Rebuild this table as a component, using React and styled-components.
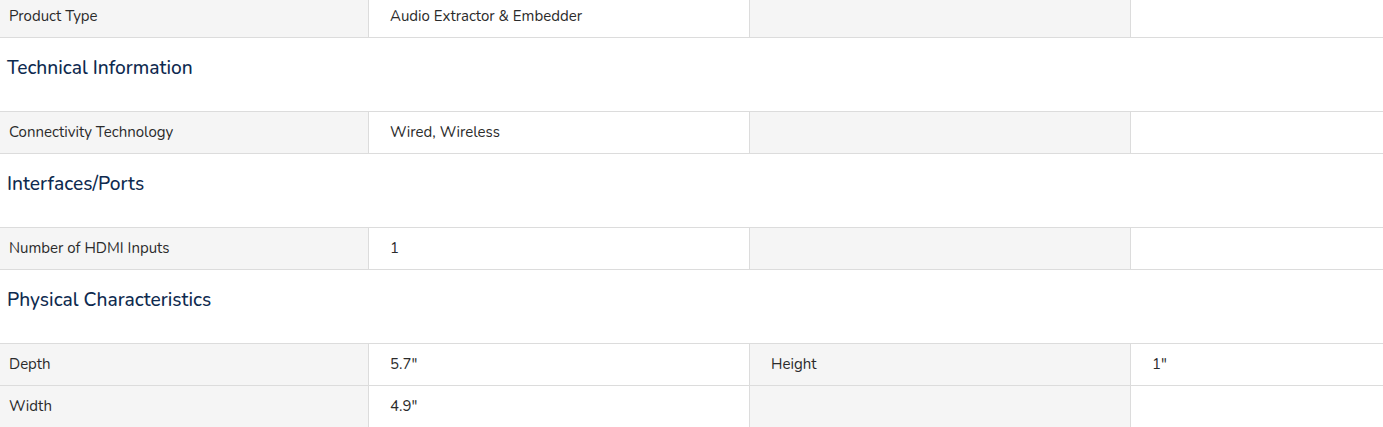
import React from "react";
import styled, { createGlobalStyle } from "styled-components";

const Global = createGlobalStyle`
  html, body { margin: 0; padding: 0; background: #fff; overflow: hidden; }
  body { font-family: "Nunito", "Lato", "Noto Sans", sans-serif; }
`;

const Page = styled.div`
  margin-top: -4px;
  width: 1383px;
`;

const Row = styled.div`
  display: grid;
  grid-template-columns: 368px 381px 381px 1fr;
  border-bottom: 1px solid #dcdcdc;
  ${(p) => (p.$first ? "" : "border-top: 1px solid #dcdcdc; margin-top: -1px;")}
`;

const Cell = styled.div`
  height: 41px;
  display: flex;
  align-items: center;
  box-sizing: border-box;
  padding-left: ${(p) => (p.$lead ? "9px" : "21px")};
  padding-bottom: 2px;
  background: ${(p) => (p.$label ? "#f5f5f5" : "#fff")};
  border-left: ${(p) => (p.$lead ? "none" : "1px solid #dcdcdc")};
  font-size: 15px;
  color: #2b2b2b;
  white-space: nowrap;
`;

const SectionTitle = styled.h3`
  margin: 0;
  height: 74px;
  box-sizing: border-box;
  padding: 18px 0 0 7px;
  font-size: 19.2px;
  font-weight: 500;
  line-height: 24px;
  color: #0e2a4f;
`;

const sections = [
  { title: null, rows: [["Product Type", "Audio Extractor & Embedder", "", ""]] },
  { title: "Technical Information", rows: [["Connectivity Technology", "Wired, Wireless", "", ""]] },
  { title: "Interfaces/Ports", rows: [["Number of HDMI Inputs", "1", "", ""]] },
  {
    title: "Physical Characteristics",
    rows: [
      ["Depth", '5.7"', "Height", '1"'],
      ["Width", '4.9"', "", ""],
    ],
  },
];

export default function App() {
  return (
    <>
      <Global />
      <Page>
        {sections.map((s, si) => (
          <React.Fragment key={si}>
            {s.title && <SectionTitle>{s.title}</SectionTitle>}
            {s.rows.map((r, ri) => (
              <Row key={ri} $first={si === 0 || ri > 0}>
                <Cell $label $lead>{r[0]}</Cell>
                <Cell>{r[1]}</Cell>
                <Cell $label>{r[2]}</Cell>
                <Cell>{r[3]}</Cell>
              </Row>
            ))}
          </React.Fragment>
        ))}
      </Page>
    </>
  );
}
